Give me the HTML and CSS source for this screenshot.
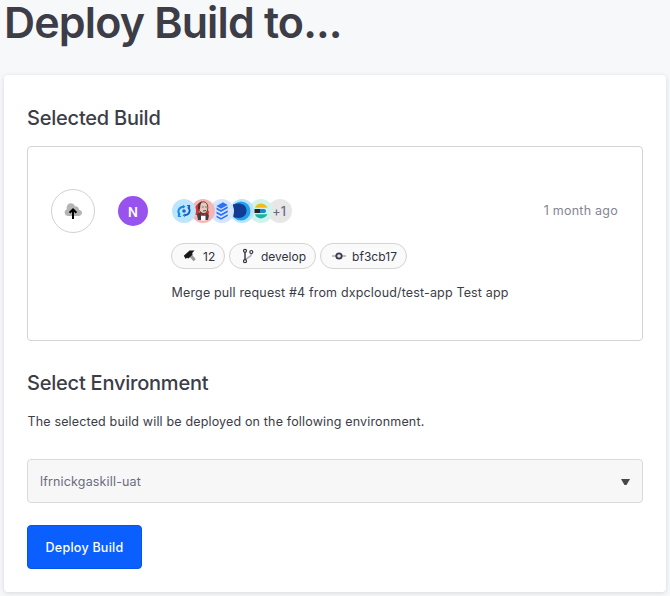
FILE: index.html
```html
<!DOCTYPE html>
<html lang="en">
<head>
<meta charset="utf-8">
<title>Deploy Build</title>
<link rel="stylesheet" href="styles.css">
</head>
<body>
<h1 class="title">Deploy Build to...</h1>
<main class="card">
  <h2 class="heading">Selected Build</h2>
  <section class="build">
    <div class="status">
      <svg width="20" height="18" viewBox="0 0 20 18"><path d="M4.500 13.900A3.500 3.500 0 0 1 3.700 7.200C3.500 3.600 5 1.300 8 1.300c2 0 3.300 1.200 3.800 2.900 2.800-.1 4.200 1.400 4.200 3.500 2 .4 3 1.600 3 3.100 0 1.900-1.500 3.100-3.600 3.100z" fill="#b4b4b4"/><path d="M10 17V8M6.600 10.800 10 7.500l3.400 3.300" fill="none" stroke="#000" stroke-width="2"/></svg>
    </div>
    <div class="avatar">N</div>
    <div class="details">
      <div class="top">
        <div class="services">
          <span class="service sync"><svg viewBox="0 0 24 24"><path d="M8 15.800C4.700 12.500 6.800 8 11.500 7.800" fill="none" stroke="#1686e8" stroke-width="1.900"/><path d="M16 8.200c3.300 3.300 1.200 7.800-3.500 8" fill="none" stroke="#155ec2" stroke-width="1.900"/><path d="M14.500 6h3.600v3.600z" fill="#155ec2"/><path d="M5.900 14.400V18h3.600z" fill="#1686e8"/><path d="m11 5.800 2.500 1.900L11 9.600zM13 14.400l-2.500 1.900 2.500 1.900z" fill="#1686e8"/><circle cx="12" cy="12" r="1.800" fill="#1769ce"/></svg></span>
          <span class="service jenkins"><svg viewBox="0 0 24 24"><path d="M4.500 16c-2-4-.5-10 3.500-12v12zM15 10l2.800 2v3.500H15z" fill="#db3434"/><path d="M6 15.500 9 13l6.500.5 2.500 3-1 4.500H7z" fill="#3a3e49"/><path d="M7.800 8.500c0-3.800 1.700-5.700 4.500-5.700s4.500 2.100 4.500 5.700-1.300 6-4 6-5-2.300-5-6z" fill="#e4cbb9" stroke="#3c2928" stroke-width=".8"/><path d="M7.300 10.500C6.300 5.500 8 2.700 11 2.500L9.500 5.500 9 10z" fill="#493332"/><path d="M11.300 8h1.300m1.800 0h1.300M12 12l3-.5" stroke="#493332" stroke-width=".9"/><path d="m9.500 14.300 2.500 2 2.800-2 .7 2.200-2.800-.5-2.700 1z" fill="#cf2929"/><path d="M10 16.800h4.500v4.700H10z" fill="#fff"/></svg></span>
          <span class="service stack"><svg viewBox="0 0 24 24"><g fill="#2c72f3"><path d="m6.500 7 6.500-3.700 4.700 2.600L11 9.700z"/><path d="m6.500 8.500 4.500 2.500 6.700-3.800v2L11 13l-4.500-2.500z"/><path d="m6.500 12.500 4.500 2.500 6.700-3.800v2L11 17l-4.500-2.500z"/><path d="m6.500 16.500 4.500 2.500 6.700-3.800v1.800L11 20.800l-4.500-2.500z"/></g></svg></span>
          <span class="service database"><svg viewBox="0 0 24 24"><circle cx="11" cy="12" r="9.500" fill="#20a0ef"/><path d="M3 5.500C10 3 16.500 5.500 16.500 11.500c0 6.500-6 9-13 6.500z" fill="#123c94"/></svg></span>
          <span class="service elastic"><svg viewBox="0 0 24 24"><path d="M6 8.700c1.500-5.500 10-5.500 12.500 0z" fill="#f2bd1b"/><path d="M5.500 10H11v4H5.500z" fill="#242424"/><path d="M11 10h4c2.700 0 2.700 4 0 4h-4z" fill="#1889c8"/><path d="M6 15.300h12.500c-2.500 5.500-11 5.500-12.500 0z" fill="#14b7a9"/></svg></span>
          <span class="service more">+1</span>
        </div>
        <time class="age">1 month ago</time>
      </div>
      <div class="tags">
        <span class="tag number"><svg width="14" height="14" viewBox="0 0 14 14"><path d="m6 7.300 2.600-2.200 4.200 5.200-2.300 1.900z" fill="#999"/><path d="M.8 6.700 6.600 1.500h5L9.200 4l.4 1.600-4.100 4-1.500-.8-1.300 1.100z" fill="#181818"/></svg>12</span>
        <span class="tag branch"><svg width="14" height="16" viewBox="0 0 14 16"><path d="M9.200 5v1.400c0 2.200-2.500 2.400-3.700 3.700-.9.600-1.700 1-2.300 2" fill="none" stroke="#aaa" stroke-width="1.500"/><path d="M3 4v8" stroke="#30313f" stroke-width="1.400"/><g fill="#fafafa" stroke="#30313f" stroke-width="1.200"><circle cx="3" cy="2.800" r="1.500"/><circle cx="3" cy="13.200" r="1.500"/><circle cx="9.300" cy="4" r="1.500"/></g></svg>develop</span>
        <span class="tag commit"><svg width="14" height="14" viewBox="0 0 14 14"><path d="M0 7h14" stroke="#aaa" stroke-width="1.500"/><circle cx="7" cy="7" r="2.700" fill="#e4e4e4" stroke="#393a4a" stroke-width="1.800"/></svg>bf3cb17</span>
      </div>
      <p class="message">Merge pull request #4 from dxpcloud/test-app Test app</p>
    </div>
  </section>
  <h2 class="heading environment">Select Environment</h2>
  <p class="description">The selected build will be deployed on the following environment.</p>
  <div class="select"><span>lfrnickgaskill-uat</span><svg width="9" height="7" viewBox="0 0 9 7"><path d="M0 0h9L5.500 6h-2z" fill="#484848"/></svg></div>
  <button class="deploy">Deploy Build</button>
</main>
</body>
</html>
```
FILE: styles.css
```css
* { box-sizing: border-box; }
body { margin: 0; height: 596px; overflow: hidden; padding: 0 4px; background: #f7f8fa; color: #3c3d47; font: 12.5px/20px Inter, sans-serif; letter-spacing: .16px; }
h1, h2, p { margin: 0; }
.title { height: 75px; font-size: 43px; line-height: 45px; font-weight: 600; letter-spacing: -.85px; white-space: nowrap; }
.card { height: 517px; padding: 31px 23px 0; background: #fff; border-radius: 4px; box-shadow: 0 1px 5px rgba(40, 50, 65, .16); }
.heading { height: 40px; font-size: 20px; line-height: 24px; font-weight: 500; letter-spacing: -.22px; }
.build { height: 195px; display: flex; border: 1px solid #d4d4d6; border-radius: 4px; padding: 42px 24px 0 23px; }
.status { width: 44px; height: 44px; border: 1px solid #d2d2d2; border-radius: 50%; display: grid; place-items: center; }
.avatar { width: 30px; height: 30px; margin: 7px 23px 0; padding-top: 1px; border-radius: 50%; display: grid; place-items: center; color: #fff; background: #9853ee; font-size: 13px; font-weight: 600; }
.details { flex: 1; }
.top { display: flex; align-items: center; justify-content: space-between; height: 44px; }
.services { display: flex; isolation: isolate; margin-left: 1px; }
.service { width: 24px; height: 24px; border-radius: 50%; margin-right: -4.800px; overflow: hidden; position: relative; }
.service svg { display: block; width: 24px; height: 24px; }
.sync { z-index: 6; background: #bde5fb; }
.jenkins { z-index: 5; background: #f6b5b5; }
.stack { z-index: 4; background: #d5e4ff; }
.database { z-index: 3; background: #b8e4fb; }
.elastic { z-index: 2; background: #d2f3ed; }
.more { background: #e7e7e7; color: #6b6c7e; line-height: 25px; font-weight: 500; text-align: right; padding-right: 6px; }
.age { color: #858590; letter-spacing: .25px; line-height: 20px; }
.tags { display: flex; gap: 4px; margin-top: 10px; }
.tag { height: 26px; padding-top: 1px; border: 1px solid #d3d3d5; border-radius: 13px; background: #fafafa; display: flex; align-items: center; font-size: 12px; letter-spacing: 0; color: #30313f; }
.tag svg { margin-top: -1px; }
.number { width: 54px; padding-left: 11px; gap: 6px; }
.branch { width: 87px; padding-left: 12px; gap: 5px; }
.commit { width: 87px; padding-left: 11px; gap: 6px; letter-spacing: .05px; }
.message { margin-top: 14px; white-space: nowrap; padding-left: .5px; }
.environment { margin-top: 30px; }
.description { padding: 1px 0 0 .5px; }
.select { height: 44px; margin-top: 27px; padding: 2px 12px 0; display: flex; align-items: center; justify-content: space-between; background: #f7f7f7; border: 1px solid #dadada; border-radius: 4px; color: #6b6c7e; }
.deploy { display: block; width: 115px; height: 44px; margin-top: 22px; padding: 2px 0 0; border: 1px solid #0754e8; border-radius: 4px; color: #fff; background: #0b5fff; font: 500 12.5px/20px Inter, sans-serif; letter-spacing: .25px; }
```
